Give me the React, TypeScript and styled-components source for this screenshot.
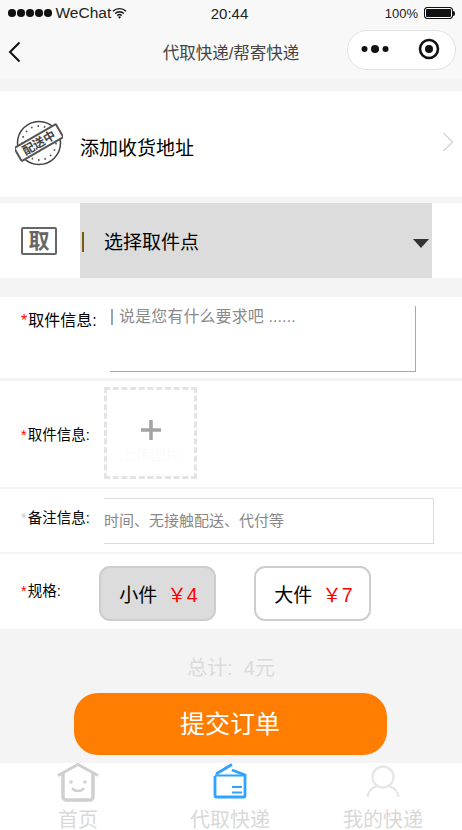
import React from "react";
import styled, { createGlobalStyle } from "styled-components";

const FONT = `"Liberation Sans", "Noto Sans CJK SC", sans-serif`;

const GlobalStyle = createGlobalStyle`
  html, body {
    margin: 0;
    padding: 0;
    background: #f4f4f4;
    font-family: ${FONT};
  }
  * { box-sizing: border-box; }
`;

export default function App() {
  return (
    <Page>
      <GlobalStyle />
      <StatusBar>
        <Carrier>
          <Dots>
            {[0, 1, 2, 3, 4].map((i) => (
              <Dot key={i} />
            ))}
          </Dots>
          <CarrierName>WeChat</CarrierName>
          <svg width="15" height="12" viewBox="0 0 16 12">
            <path d="M1 4.200a10 10 0 0 1 14 0M3.400 6.600a6.600 6.600 0 0 1 9.200 0M5.700 8.800a3.300 3.300 0 0 1 4.600 0" fill="none" stroke="#111" strokeWidth="1.500" />
            <path d="M8 12l-1.500-1.700a2 2 0 0 1 3 0z" fill="#111" />
          </svg>
        </Carrier>
        <Clock>20:44</Clock>
        <Battery>
          <span>100%</span>
          <BatteryBody />
          <BatteryTip />
        </Battery>
      </StatusBar>
      <NavBar>
        <BackIcon width="14" height="22" viewBox="0 0 14 22">
          <path d="M12.500 1.500L3 11l9.500 9.500" fill="none" stroke="#111" strokeWidth="2" />
        </BackIcon>
        <NavTitle>代取快递/帮寄快递</NavTitle>
        <Capsule>
          <svg width="28" height="10" viewBox="0 0 28 10">
            <circle cx="3.500" cy="5" r="3" fill="#111" />
            <circle cx="14" cy="5" r="4" fill="#111" />
            <circle cx="24.500" cy="5" r="3" fill="#111" />
          </svg>
          <svg width="22" height="22" viewBox="0 0 22 22">
            <circle cx="11" cy="11" r="9" fill="none" stroke="#111" strokeWidth="2.600" />
            <circle cx="11" cy="11" r="4" fill="#111" />
          </svg>
        </Capsule>
      </NavBar>

      <AddressRow>
        <StampIcon width="48" height="48" viewBox="0 0 48 48">
          <circle cx="24" cy="24" r="21.500" fill="none" stroke="#444" strokeWidth="1.500" />
          <circle cx="24" cy="24" r="17" fill="none" stroke="#555" strokeWidth="1.800" strokeDasharray="1.500 5" />
          <g transform="rotate(-30 24 24)">
            <rect x="0" y="16" width="48" height="15" rx="1" fill="#fff" stroke="#555" strokeWidth="2" />
            <text x="24" y="28" textAnchor="middle" fontSize="12" fontWeight="700" fill="#444" fontFamily={FONT}>配送中</text>
          </g>
        </StampIcon>
        <AddressText>添加收货地址</AddressText>
        <Chevron width="12" height="20" viewBox="0 0 12 20">
          <path d="M1.500 1l9 9-9 9" fill="none" stroke="#d6d6d6" strokeWidth="1.500" />
        </Chevron>
      </AddressRow>

      <PickRow>
        <PickBadge>
          <PickGlyph>取</PickGlyph>
        </PickBadge>
        <PickSelect>
          <Caret />
          <PickText>选择取件点</PickText>
          <DownArrow />
        </PickSelect>
      </PickRow>

      <TextareaRow>
        <Label $top>
          <Star>*</Star>取件信息:
        </Label>
        <TextareaBox>
          <TextCursor />
          说是您有什么要求吧 ......
        </TextareaBox>
      </TextareaRow>

      <ImageRow>
        <Label $small>
          <Star>*</Star>取件信息:
        </Label>
        <UploadBox>
          <svg width="20" height="20" viewBox="0 0 20 20">
            <path d="M10 0v20M0 10h20" stroke="#a3a3a3" strokeWidth="3.500" />
          </svg>
          <UploadHint>上传图片</UploadHint>
        </UploadBox>
      </ImageRow>

      <NoteRow>
        <Label $small $lifted>
          <Star $muted>*</Star>备注信息:
        </Label>
        <NoteBox>时间、无接触配送、代付等</NoteBox>
      </NoteRow>

      <SpecRow>
        <SpecLabel>
          <Star>*</Star>规格:
        </SpecLabel>
        <SpecOption $active>
          小件<Price>￥4</Price>
        </SpecOption>
        <SpecOption>
          大件<Price>￥7</Price>
        </SpecOption>
      </SpecRow>

      <Footer>
        <Total>总计:&nbsp;&nbsp;4元</Total>
        <SubmitButton>提交订单</SubmitButton>
      </Footer>

      <TabBar>
        <Tab>
          <TabIcon width="44" height="39" viewBox="0 0 44 39">
            <path d="M2 12.500L22 1.500l20 11" fill="none" stroke="#cfcfcf" strokeWidth="3" />
            <path d="M7 10v24a3 3 0 0 0 3 3h24a3 3 0 0 0 3-3V10" fill="none" stroke="#cfcfcf" strokeWidth="3.500" />
            <circle cx="15" cy="19" r="1.800" fill="#cfcfcf" />
            <circle cx="29" cy="19" r="1.800" fill="#cfcfcf" />
            <path d="M16 25c3 4 9 4 12 0" fill="none" stroke="#cfcfcf" strokeWidth="2.500" />
          </TabIcon>
          <TabLabel>首页</TabLabel>
        </Tab>
        <Tab>
          <TabIcon width="44" height="39" viewBox="0 0 44 39">
            <path d="M8 11L24 1.500M7 13v20a1 1 0 0 0 1 1h28a1 1 0 0 0 1-1V12L24 7" fill="none" stroke="#2fa4ff" strokeWidth="2.800" />
            <path d="M7 12.500h30M24 24h10M24 29.500h10" fill="none" stroke="#2fa4ff" strokeWidth="2" />
          </TabIcon>
          <TabLabel>代取快递</TabLabel>
        </Tab>
        <Tab>
          <TabIcon width="44" height="39" viewBox="0 0 44 39">
            <circle cx="22" cy="14" r="10.500" fill="none" stroke="#e6e6e6" strokeWidth="2.300" />
            <path d="M6.500 34c1-6 5-9.500 9-10.500M37.500 34c-1-6-5-9.500-9-10.500" fill="none" stroke="#e6e6e6" strokeWidth="2.300" />
          </TabIcon>
          <TabLabel>我的快递</TabLabel>
        </Tab>
      </TabBar>
    </Page>
  );
}

const Page = styled.div`
  width: 462px;
  height: 830px;
  overflow: hidden;
  display: flex;
  flex-direction: column;
  background: #f4f4f4;
  color: #000;
`;

const StatusBar = styled.div`
  height: 26px;
  flex: none;
  background: #f8f8f8;
  padding: 0 7px 0 8px;
  display: grid;
  grid-template-columns: 1fr auto 1fr;
  align-items: center;
  font-size: 15px;
  color: #222;
`;

const Carrier = styled.div`
  display: flex;
  align-items: center;
  gap: 1px;
`;

const CarrierName = styled.span`
  margin-left: 3px;
  font-size: 15.500px;
`;

const Dots = styled.div`
  display: flex;
  gap: 1.500px;
`;

const Dot = styled.span`
  width: 7.500px;
  height: 7.500px;
  border-radius: 50%;
  background: #111;
`;

const Clock = styled.div`
  font-size: 15px;
  position: relative;
  left: -2px;
`;

const Battery = styled.div`
  display: flex;
  align-items: center;
  justify-content: flex-end;
  font-size: 13px;
  gap: 6px;
`;

const BatteryBody = styled.span`
  width: 29px;
  height: 12px;
  border: 1px solid #111;
  border-radius: 3px;
  background: #111;
  box-shadow: inset 0 0 0 1px #f8f8f8;
`;

const BatteryTip = styled.span`
  width: 2px;
  height: 5px;
  margin-left: -6px;
  background: #111;
  border-radius: 0 2px 2px 0;
`;

const NavBar = styled.div`
  height: 52px;
  flex: none;
  background: #f8f8f8;
  display: flex;
  align-items: center;
  position: relative;
  padding: 0 6px 0 7px;
`;

const BackIcon = styled.svg`
  flex: none;
`;

const NavTitle = styled.div`
  position: absolute;
  left: 0;
  right: 0;
  top: 17px;
  text-align: center;
  font-size: 16.500px;
  line-height: 20px;
  color: #444;
`;

const Capsule = styled.div`
  margin-left: auto;
  margin-top: -5px;
  width: 109px;
  height: 40px;
  border: 1px solid #e2e2e2;
  border-radius: 20px;
  background: #fff;
  display: flex;
  align-items: center;
  justify-content: space-between;
  padding: 0 15px 2px 13px;
  position: relative;
`;

const AddressRow = styled.div`
  height: 106px;
  flex: none;
  margin-top: 13px;
  background: #fff;
  display: flex;
  align-items: center;
  padding: 0 8px 0 15px;
`;

const StampIcon = styled.svg`
  flex: none;
  margin-right: 17px;
  position: relative;
  top: -1px;
`;

const AddressText = styled.div`
  font-size: 19px;
  flex: 1;
  position: relative;
  top: 2px;
`;

const Chevron = styled.svg`
  flex: none;
  margin-top: -5px;
`;

const PickRow = styled.div`
  height: 75px;
  flex: none;
  margin-top: 6px;
  background: #fff;
  display: flex;
  align-items: stretch;
`;

const PickBadge = styled.div`
  width: 80px;
  flex: none;
  display: flex;
  align-items: center;
  justify-content: flex-start;
  padding-left: 21px;
`;

const PickGlyph = styled.div`
  width: 36px;
  height: 28px;
  border: 2px solid #666;
  border-radius: 2px;
  font-size: 21px;
  line-height: 24px;
  font-weight: 700;
  color: #666;
  text-align: center;
`;

const PickSelect = styled.div`
  width: 352px;
  flex: none;
  background: #dcdcdc;
  display: flex;
  align-items: center;
  padding-right: 3px;
`;

const Caret = styled.span`
  width: 2px;
  height: 20px;
  margin-left: 2px;
  background: #7a5a10;
  position: relative;
  top: 1px;
`;

const PickText = styled.div`
  font-size: 19px;
  margin-left: 20px;
  flex: 1;
`;

const DownArrow = styled.span`
  width: 16px;
  height: 9px;
  background: #333;
  clip-path: polygon(0 0, 100% 0, 50% 100%);
  position: relative;
  top: 3px;
`;

const TextareaRow = styled.div`
  height: 81px;
  flex: none;
  margin-top: 19px;
  background: #fff;
  display: flex;
`;

const Label = styled.div<{ $top?: boolean; $small?: boolean; $lifted?: boolean }>`
  width: ${(p) => (p.$small ? 104 : 110)}px;
  flex: none;
  padding-left: 21px;
  font-size: ${(p) => (p.$small ? 14.5 : 16)}px;
  white-space: nowrap;
  align-self: ${(p) => (p.$top ? "flex-start" : "center")};
  margin-top: ${(p) => (p.$top ? 11 : 0)}px;
  position: relative;
  top: ${(p) => (p.$lifted ? -4 : -1)}px;
`;

const Star = styled.span<{ $muted?: boolean }>`
  color: ${(p) => (p.$muted ? "#ccc" : "#f00")};
  margin-right: 1px;
`;

const TextareaBox = styled.div`
  width: 306px;
  height: 66px;
  margin-top: 9px;
  border-right: 1px solid #aaa;
  border-bottom: 1px solid #aaa;
  font-size: 16px;
  line-height: 22px;
  color: #8a8a8a;
  display: flex;
  align-items: flex-start;
  letter-spacing: 0.1px;
`;

const TextCursor = styled.span`
  width: 2px;
  height: 16px;
  margin: 3px 6px 0 1px;
  background: #8aa8c8;
`;

const ImageRow = styled.div`
  height: 106px;
  flex: none;
  margin-top: 3px;
  background: #fff;
  display: flex;
  align-items: center;
`;

const UploadBox = styled.div`
  width: 93px;
  height: 92px;
  border: 3px dashed #e4e4e4;
  display: flex;
  flex-direction: column;
  align-items: center;
  padding-top: 30px;
  position: relative;
  top: -1px;
`;

const UploadHint = styled.div`
  font-size: 15px;
  color: #fbfbfb;
  margin-top: 3px;
`;

const NoteRow = styled.div`
  height: 63px;
  flex: none;
  margin-top: 2px;
  background: #fff;
  display: flex;
  align-items: center;
`;

const NoteBox = styled.div`
  width: 330px;
  height: 46px;
  border: 1px solid #dcdcdc;
  border-left: none;
  font-size: 15px;
  line-height: 43px;
  color: #888;
`;

const SpecRow = styled.div`
  height: 75px;
  flex: none;
  margin-top: 2px;
  background: #fff;
  display: flex;
  align-items: center;
`;

const SpecLabel = styled.div`
  width: 99px;
  flex: none;
  padding-left: 21px;
  font-size: 14.500px;
  position: relative;
  top: -2px;
`;

const SpecOption = styled.div<{ $active?: boolean }>`
  width: 117px;
  height: 55px;
  margin-right: 38px;
  padding-left: 2px;
  border: 2px solid #cdcdcd;
  border-radius: 11px;
  background: ${(p) => (p.$active ? "#dcdcdc" : "#fff")};
  font-size: 19px;
  display: flex;
  align-items: center;
  justify-content: center;
  position: relative;
  top: 2px;
`;

const Price = styled.span`
  color: #f00;
  margin-left: 10px;
  font-size: 19.500px;
`;

const Footer = styled.div`
  flex: 1;
  display: flex;
  flex-direction: column;
  align-items: center;
`;

const Total = styled.div`
  margin-top: 27px;
  font-size: 20px;
  line-height: 24px;
  color: #dadada;
`;

const SubmitButton = styled.div`
  width: 313px;
  height: 62px;
  margin: 13px 2px 0 0;
  border-radius: 24px;
  background: #ff7d00;
  color: #fff;
  font-size: 25px;
  line-height: 62px;
  text-align: center;
`;

const TabBar = styled.div`
  height: 67px;
  flex: none;
  background: #fff;
  display: grid;
  grid-template-columns: 156px 148px 158px;
`;

const Tab = styled.div`
  display: flex;
  flex-direction: column;
  align-items: center;
`;

const TabIcon = styled.svg`
  flex: none;
`;

const TabLabel = styled.div`
  font-size: 20px;
  line-height: 27px;
  margin-top: 5px;
  color: #d8d8d8;
`;
